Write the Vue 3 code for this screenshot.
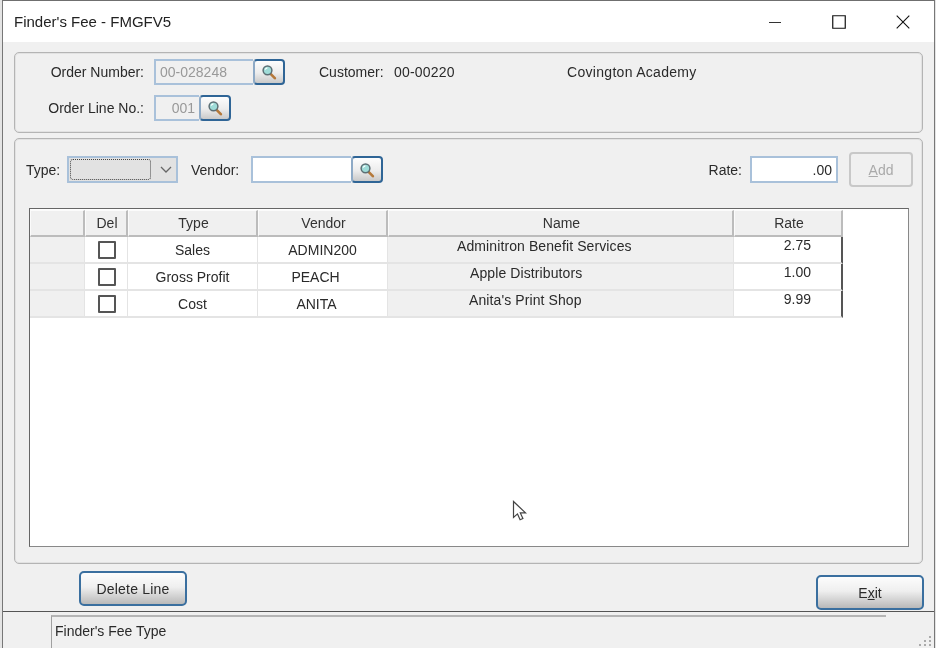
<template>
  <div class="screen">
    <div class="window">
      <div class="titlebar">
        <span class="title">Finder's Fee - FMGFV5</span>
        <div class="controls">
          <svg width="14" height="14" viewBox="0 0 14 14"><path d="M1 7.5h12" stroke="#333" fill="none" /></svg>
          <svg width="14" height="14" viewBox="0 0 14 14"><path d="M.75.75h12.5v12.5H.75z" stroke="#111" stroke-width="1.2" fill="none" /></svg>
          <svg width="14" height="14" viewBox="0 0 14 14"><path d="M.7.7l12.6 12.6M13.3.7L.7 13.3" stroke="#111" stroke-width="1.1" fill="none" /></svg>
        </div>
      </div>

      <div class="content">
        <section class="group order-group">
          <div class="form-row">
            <label class="form-label">Order Number:</label>
            <input class="field order-number" value="00-028248" readonly />
            <button type="button" class="search-btn"><svg class="lens" viewBox="0 0 16 16"><use href="#lens" /></svg></button>
            <span class="customer-label">Customer:</span>
            <span class="customer-code">00-00220</span>
            <span class="customer-name">Covington Academy</span>
          </div>
          <div class="form-row">
            <label class="form-label">Order Line No.:</label>
            <input class="field order-line" value="001" readonly />
            <button type="button" class="search-btn"><svg class="lens" viewBox="0 0 16 16"><use href="#lens" /></svg></button>
          </div>
        </section>

        <section class="group line-group">
          <div class="entry-row">
            <label class="type-label">Type:</label>
            <div class="select">
              <span class="select-focus"></span>
              <svg class="chevron" width="12" height="8" viewBox="0 0 12 8"><path d="M1 1l5 5 5-5" stroke="#666" stroke-width="1.3" fill="none" /></svg>
            </div>
            <label class="vendor-label">Vendor:</label>
            <input class="field vendor-input" />
            <button type="button" class="search-btn"><svg class="lens" viewBox="0 0 16 16"><use href="#lens" /></svg></button>
            <label class="rate-label">Rate:</label>
            <input class="field rate-input" value=".00" />
            <button type="button" class="add-btn" disabled><u>A</u>dd</button>
          </div>

          <div class="grid-box">
            <div class="grid">
              <div class="head"></div>
              <div class="head">Del</div>
              <div class="head">Type</div>
              <div class="head">Vendor</div>
              <div class="head">Name</div>
              <div class="head">Rate</div>
              <template v-for="row in rows" :key="row.vendor">
                <div class="cell shaded"></div>
                <div class="cell check-cell"><input type="checkbox" class="check" /></div>
                <div class="cell">{{ row.type }}</div>
                <div class="cell" :style="{ paddingRight: row.vendorShift + 'px' }">{{ row.vendor }}</div>
                <div class="cell shaded name" :style="{ paddingLeft: row.nameIndent + 'px' }">{{ row.name }}</div>
                <div class="cell rate">{{ row.rate }}</div>
              </template>
            </div>
          </div>
          <svg class="cursor" width="16" height="22" viewBox="0 0 16 22">
            <path d="M1.5 1.5v16l4-3.6 2.6 5.8 2.8-1.2-2.6-5.6h5.2z" fill="#fff" stroke="#444" stroke-width="1.2" />
          </svg>
        </section>

        <div class="actions">
          <button type="button" class="action-btn delete-btn">Delete Line</button>
          <button type="button" class="action-btn exit-btn">E<u>x</u>it</button>
        </div>
      </div>

      <footer class="statusbar">
        <div class="status-panel">Finder's Fee Type</div>
        <svg class="grip" width="14" height="14" viewBox="0 0 14 14" fill="#aaa">
          <rect x="10" y="2" width="2" height="2" /><rect x="5" y="6" width="2" height="2" /><rect x="10" y="6" width="2" height="2" />
          <rect x="0" y="10" width="2" height="2" /><rect x="5" y="10" width="2" height="2" /><rect x="10" y="10" width="2" height="2" />
        </svg>
      </footer>
    </div>

    <svg width="0" height="0" class="defs">
      <defs>
        <g id="lens">
          <path d="M9.6 9.8l4.2 4.4" stroke="#b5793a" stroke-width="2.6" stroke-linecap="round" />
          <circle cx="6.5" cy="6.3" r="4.4" fill="#9fdcd8" stroke="#5d6f75" stroke-width="1.5" />
          <path d="M4.2 5.6a2.6 2.6 0 0 1 2.2-1.8" stroke="#fff" stroke-width="1.2" fill="none" />
        </g>
      </defs>
    </svg>
  </div>
</template>

<script setup>
const rows = [
  { type: 'Sales', vendor: 'ADMIN200', vendorShift: 0, name: 'Adminitron Benefit Services', nameIndent: 69, rate: '2.75' },
  { type: 'Gross Profit', vendor: 'PEACH', vendorShift: 14, name: 'Apple Distributors', nameIndent: 82, rate: '1.00' },
  { type: 'Cost', vendor: 'ANITA', vendorShift: 12, name: "Anita's Print Shop", nameIndent: 81, rate: '9.99' },
]
</script>

<style>
html,
body {
  margin: 0;
  background: #f0f0f0;
}
</style>

<style scoped>
.screen {
  width: 936px;
  height: 648px;
  overflow: hidden;
  box-sizing: border-box;
  padding-left: 2px;
  background: #e4e4e4;
  font-family: "Liberation Sans", Arial, sans-serif;
  font-size: 14px;
  color: #2a2a2a;
  filter: blur(0.45px);
}
.screen * {
  box-sizing: border-box;
}
.defs {
  position: absolute;
}
.window {
  width: 933px;
  height: 648px;
  display: flex;
  flex-direction: column;
  background: #f0f0f0;
  border-top: 1px solid #6f6f6f;
  border-left: 1px solid #777;
  border-right: 1px solid #777;
}
.titlebar {
  height: 41px;
  flex: none;
  display: flex;
  align-items: center;
  justify-content: space-between;
  background: #fff;
  padding: 0 24px 0 11px;
  font-size: 15px;
  color: #222;
}
.controls {
  display: flex;
  gap: 50px;
}
.content {
  flex: 1;
  padding: 10px 11px 0 11px;
  display: flex;
  flex-direction: column;
  gap: 5px;
}
.group {
  border: 1px solid #b4b4b4;
  box-shadow: inset 0 0 0 1px #e2e2e2;
  border-radius: 5px;
}
.order-group {
  height: 81px;
  padding-top: 6px;
  display: flex;
  flex-direction: column;
  gap: 10px;
}
.form-row {
  height: 26px;
  display: flex;
  align-items: center;
}
.form-label {
  width: 129px;
  margin-right: 10px;
  text-align: right;
}
.field {
  height: 100%;
  padding: 0 4px;
  border: 2px solid #a9c1da;
  background: #fff;
  font: inherit;
  color: inherit;
  outline: none;
  text-align: right;
}
.order-number,
.order-line {
  background: #f0f0f0;
  color: #999;
  border-right: none;
}
.order-number {
  width: 99px;
  text-align: left;
}
.order-line {
  width: 45px;
}
.search-btn {
  width: 32px;
  height: 26px;
  flex: none;
  padding: 0;
  display: flex;
  align-items: center;
  justify-content: center;
  border: 2px solid #2f6596;
  border-left-color: #8eaac6;
  border-radius: 4px;
  background: linear-gradient(#fdfdfd, #ececec 55%, #c9c9c9);
}
.lens {
  width: 16px;
  height: 16px;
}
.customer-label {
  margin-left: 34px;
  width: 75px;
}
.customer-code {
  width: 173px;
  letter-spacing: 0.2px;
}
.customer-name {
  letter-spacing: 0.3px;
}
.line-group {
  position: relative;
  height: 426px;
  padding: 13px 9px 0 11px;
}
.entry-row {
  height: 35px;
  display: flex;
  align-items: center;
}
.entry-row .field,
.select {
  height: 27px;
}
.entry-row .search-btn {
  height: 27px;
}
.type-label {
  width: 41px;
}
.select {
  width: 111px;
  padding: 1px 3px 1px 1px;
  display: flex;
  align-items: center;
  border: 2px solid #a9c1da;
  background: #e2e2e2;
}
.select-focus {
  width: 81px;
  height: 100%;
  border: 1.5px dotted #444;
  border-radius: 3px;
}
.chevron {
  margin-left: 9px;
}
.vendor-label {
  margin-left: 13px;
  width: 60px;
}
.vendor-input {
  width: 100px;
  border-right: none;
}
.rate-label {
  margin-left: auto;
  margin-right: 8px;
}
.rate-input {
  width: 88px;
}
.add-btn {
  margin-left: 11px;
  width: 64px;
  height: 35px;
  border: 2px solid #c8c8c8;
  border-radius: 4px;
  background: #f0f0f0;
  color: #aaa;
  font: inherit;
}
.grid-box {
  margin: 21px 0 0 3px;
  width: 880px;
  height: 339px;
  background: #fff;
  border: 1px solid #666;
  border-right-color: #888;
  border-bottom-color: #888;
  padding-top: 1px;
}
.grid {
  display: grid;
  width: 813px;
  grid-template-columns: 55px 43px 130px 130px 346px 109px;
  grid-auto-rows: 27px;
}
.head {
  display: flex;
  align-items: center;
  justify-content: center;
  padding-left: 2px;
  background: #f0f0f0;
  border-right: 2px solid #bcbcbc;
  border-bottom: 2px solid #bcbcbc;
  border-top: 1px solid #fbfbfb;
  border-left: 1px solid #fbfbfb;
  color: #333;
}
.cell {
  display: flex;
  align-items: center;
  justify-content: center;
  background: #fff;
  border-right: 1px solid #e4e4e4;
  border-bottom: 2px solid #e4e4e4;
}
.check-cell {
  padding-left: 1px;
}
.shaded {
  background: #f0f0f0;
}
.name {
  justify-content: flex-start;
  align-items: flex-start;
  padding-top: 1px;
  letter-spacing: 0.1px;
}
.rate {
  justify-content: flex-end;
  align-items: flex-start;
  padding-right: 30px;
  border-right: 2px solid #555;
}
.check {
  appearance: none;
  width: 18px;
  height: 18px;
  margin: 0;
  background: #fff;
  border: 2px solid #555;
  border-radius: 1px;
}
.cursor {
  position: absolute;
  left: 497px;
  top: 361px;
}
.actions {
  height: 47px;
  display: flex;
  justify-content: space-between;
  align-items: flex-start;
  padding-left: 65px;
  margin-top: -5px;
}
.action-btn {
  width: 108px;
  height: 35px;
  border: 2px solid #3a6f9f;
  border-radius: 5px;
  background: linear-gradient(#fcfcfc, #efefef 45%, #b9b9b9);
  font: inherit;
  color: #2a2a2a;
}
.delete-btn {
  margin-top: 7px;
  letter-spacing: 0.2px;
}
.exit-btn {
  margin-top: 11px;
  margin-right: -1px;
}
.statusbar {
  height: 37px;
  flex: none;
  display: flex;
  align-items: flex-end;
  border-top: 1px solid #555;
  padding-left: 48px;
}
.status-panel {
  width: 835px;
  height: 33px;
  padding-top: 6px;
  border-top: 2px solid #b5b5b5;
  border-left: 1px solid #a0a0a0;
  padding-left: 3px;
}
.grip {
  margin-left: 33px;
  flex: none;
}
</style>
